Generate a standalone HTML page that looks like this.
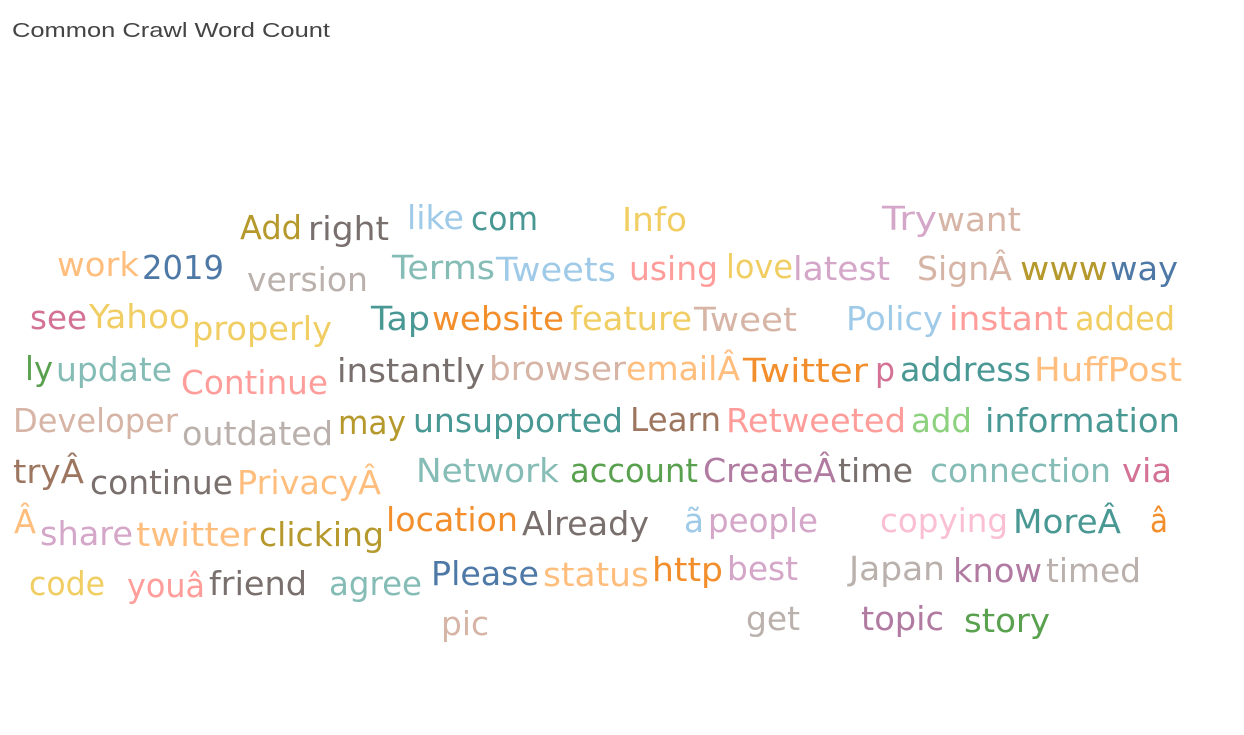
<!DOCTYPE html>
<html><head><meta charset="utf-8"><style>
html,body{margin:0;padding:0;background:#fff;width:1244px;height:735px;overflow:hidden}
svg{display:block}
text{font-family:"DejaVu Sans","Liberation Sans",sans-serif;font-size:33px}
</style></head><body>
<svg width="1244" height="735" xmlns="http://www.w3.org/2000/svg">
<text x="12" y="37" style="font-size:20px;font-family:'Liberation Sans',sans-serif" fill="#444" textLength="318" lengthAdjust="spacingAndGlyphs">Common Crawl Word Count</text>
<g>
<text x="240" y="239" fill="#b6992d" textLength="62" lengthAdjust="spacingAndGlyphs">Add</text>
<text x="308" y="240" fill="#79706e" textLength="81" lengthAdjust="spacingAndGlyphs">right</text>
<text x="407" y="229" fill="#a0cbe8" textLength="57" lengthAdjust="spacingAndGlyphs">like</text>
<text x="471" y="230" fill="#499894" textLength="67" lengthAdjust="spacingAndGlyphs">com</text>
<text x="622" y="231" fill="#f1ce63" textLength="65" lengthAdjust="spacingAndGlyphs">Info</text>
<text x="882" y="230" fill="#d4a6c8" textLength="55" lengthAdjust="spacingAndGlyphs">Try</text>
<text x="937" y="231" fill="#d7b5a6" textLength="84" lengthAdjust="spacingAndGlyphs">want</text>

<text x="57" y="276" fill="#ffbe7d" textLength="82" lengthAdjust="spacingAndGlyphs">work</text>
<text x="142" y="279" fill="#4e79a7" textLength="82" lengthAdjust="spacingAndGlyphs">2019</text>
<text x="247" y="291" fill="#bab0ac" textLength="121" lengthAdjust="spacingAndGlyphs">version</text>
<text x="392" y="279" fill="#86bcb6" textLength="103" lengthAdjust="spacingAndGlyphs">Terms</text>
<text x="496" y="281" fill="#a0cbe8" textLength="120" lengthAdjust="spacingAndGlyphs">Tweets</text>
<text x="629" y="280" fill="#ff9d9a" textLength="89" lengthAdjust="spacingAndGlyphs">using</text>
<text x="726" y="278" fill="#f1ce63" textLength="67" lengthAdjust="spacingAndGlyphs">love</text>
<text x="793" y="280" fill="#d4a6c8" textLength="97" lengthAdjust="spacingAndGlyphs">latest</text>
<text x="917" y="280" fill="#d7b5a6" textLength="95" lengthAdjust="spacingAndGlyphs">SignÂ</text>
<text x="1020" y="280" fill="#b6992d" textLength="88" lengthAdjust="spacingAndGlyphs">www</text>
<text x="1110" y="280" fill="#4e79a7" textLength="68" lengthAdjust="spacingAndGlyphs">way</text>

<text x="30" y="329" fill="#d37295" textLength="57" lengthAdjust="spacingAndGlyphs">see</text>
<text x="89" y="328" fill="#f1ce63" textLength="101" lengthAdjust="spacingAndGlyphs">Yahoo</text>
<text x="192" y="340" fill="#f1ce63" textLength="140" lengthAdjust="spacingAndGlyphs">properly</text>
<text x="371" y="330" fill="#499894" textLength="59" lengthAdjust="spacingAndGlyphs">Tap</text>
<text x="432" y="330" fill="#f28e2b" textLength="132" lengthAdjust="spacingAndGlyphs">website</text>
<text x="570" y="330" fill="#f1ce63" textLength="122" lengthAdjust="spacingAndGlyphs">feature</text>
<text x="694" y="331" fill="#d7b5a6" textLength="103" lengthAdjust="spacingAndGlyphs">Tweet</text>
<text x="846" y="330" fill="#a0cbe8" textLength="97" lengthAdjust="spacingAndGlyphs">Policy</text>
<text x="949" y="330" fill="#ff9d9a" textLength="119" lengthAdjust="spacingAndGlyphs">instant</text>
<text x="1075" y="330" fill="#f1ce63" textLength="100" lengthAdjust="spacingAndGlyphs">added</text>

<text x="25" y="380" fill="#59a14f" textLength="28" lengthAdjust="spacingAndGlyphs">ly</text>
<text x="56" y="381" fill="#86bcb6" textLength="116" lengthAdjust="spacingAndGlyphs">update</text>
<text x="181" y="394" fill="#ff9d9a" textLength="147" lengthAdjust="spacingAndGlyphs">Continue</text>
<text x="337" y="382" fill="#79706e" textLength="148" lengthAdjust="spacingAndGlyphs">instantly</text>
<text x="489" y="380" fill="#d7b5a6" textLength="137" lengthAdjust="spacingAndGlyphs">browser</text>
<text x="626" y="380" fill="#ffbe7d" textLength="114" lengthAdjust="spacingAndGlyphs">emailÂ</text>
<text x="743" y="382" fill="#f28e2b" textLength="125" lengthAdjust="spacingAndGlyphs">Twitter</text>
<text x="875" y="381" fill="#d37295" textLength="20" lengthAdjust="spacingAndGlyphs">p</text>
<text x="900" y="381" fill="#499894" textLength="131" lengthAdjust="spacingAndGlyphs">address</text>
<text x="1034" y="381" fill="#ffbe7d" textLength="148" lengthAdjust="spacingAndGlyphs">HuffPost</text>

<text x="13" y="432" fill="#d7b5a6" textLength="165" lengthAdjust="spacingAndGlyphs">Developer</text>
<text x="182" y="445" fill="#bab0ac" textLength="151" lengthAdjust="spacingAndGlyphs">outdated</text>
<text x="338" y="434" fill="#b6992d" textLength="68" lengthAdjust="spacingAndGlyphs">may</text>
<text x="413" y="432" fill="#499894" textLength="210" lengthAdjust="spacingAndGlyphs">unsupported</text>
<text x="630" y="431" fill="#9d7660" textLength="91" lengthAdjust="spacingAndGlyphs">Learn</text>
<text x="726" y="432" fill="#ff9d9a" textLength="180" lengthAdjust="spacingAndGlyphs">Retweeted</text>
<text x="911" y="432" fill="#8cd17d" textLength="61" lengthAdjust="spacingAndGlyphs">add</text>
<text x="985" y="432" fill="#499894" textLength="195" lengthAdjust="spacingAndGlyphs">information</text>

<text x="13" y="483" fill="#9d7660" textLength="71" lengthAdjust="spacingAndGlyphs">tryÂ</text>
<text x="90" y="494" fill="#79706e" textLength="143" lengthAdjust="spacingAndGlyphs">continue</text>
<text x="237" y="494" fill="#ffbe7d" textLength="144" lengthAdjust="spacingAndGlyphs">PrivacyÂ</text>
<text x="416" y="482" fill="#86bcb6" textLength="143" lengthAdjust="spacingAndGlyphs">Network</text>
<text x="570" y="482" fill="#59a14f" textLength="128" lengthAdjust="spacingAndGlyphs">account</text>
<text x="703" y="482" fill="#b07aa1" textLength="133" lengthAdjust="spacingAndGlyphs">CreateÂ</text>
<text x="838" y="482" fill="#79706e" textLength="75" lengthAdjust="spacingAndGlyphs">time</text>
<text x="930" y="482" fill="#86bcb6" textLength="181" lengthAdjust="spacingAndGlyphs">connection</text>
<text x="1122" y="482" fill="#d37295" textLength="50" lengthAdjust="spacingAndGlyphs">via</text>

<text x="14" y="533" fill="#ffbe7d" textLength="22" lengthAdjust="spacingAndGlyphs">Â</text>
<text x="40" y="545" fill="#d4a6c8" textLength="93" lengthAdjust="spacingAndGlyphs">share</text>
<text x="136" y="546" fill="#ffbe7d" textLength="120" lengthAdjust="spacingAndGlyphs">twitter</text>
<text x="259" y="546" fill="#b6992d" textLength="125" lengthAdjust="spacingAndGlyphs">clicking</text>
<text x="386" y="531" fill="#f28e2b" textLength="132" lengthAdjust="spacingAndGlyphs">location</text>
<text x="522" y="535" fill="#79706e" textLength="127" lengthAdjust="spacingAndGlyphs">Already</text>
<text x="684" y="532" fill="#a0cbe8" textLength="20" lengthAdjust="spacingAndGlyphs">ã</text>
<text x="708" y="532" fill="#d4a6c8" textLength="110" lengthAdjust="spacingAndGlyphs">people</text>
<text x="880" y="532" fill="#fabfd2" textLength="128" lengthAdjust="spacingAndGlyphs">copying</text>
<text x="1013" y="533" fill="#499894" textLength="108" lengthAdjust="spacingAndGlyphs">MoreÂ</text>
<text x="1150" y="532" fill="#f28e2b" textLength="18" lengthAdjust="spacingAndGlyphs">â</text>

<text x="29" y="595" fill="#f1ce63" textLength="76" lengthAdjust="spacingAndGlyphs">code</text>
<text x="127" y="597" fill="#ff9d9a" textLength="78" lengthAdjust="spacingAndGlyphs">youâ</text>
<text x="209" y="595" fill="#79706e" textLength="98" lengthAdjust="spacingAndGlyphs">friend</text>
<text x="329" y="595" fill="#86bcb6" textLength="93" lengthAdjust="spacingAndGlyphs">agree</text>
<text x="431" y="585" fill="#4e79a7" textLength="108" lengthAdjust="spacingAndGlyphs">Please</text>
<text x="543" y="586" fill="#ffbe7d" textLength="106" lengthAdjust="spacingAndGlyphs">status</text>
<text x="652" y="581" fill="#f28e2b" textLength="71" lengthAdjust="spacingAndGlyphs">http</text>
<text x="727" y="580" fill="#d4a6c8" textLength="71" lengthAdjust="spacingAndGlyphs">best</text>
<text x="849" y="580" fill="#bab0ac" textLength="96" lengthAdjust="spacingAndGlyphs">Japan</text>
<text x="953" y="582" fill="#b07aa1" textLength="89" lengthAdjust="spacingAndGlyphs">know</text>
<text x="1046" y="582" fill="#bab0ac" textLength="95" lengthAdjust="spacingAndGlyphs">timed</text>

<text x="441" y="635" fill="#d7b5a6" textLength="48" lengthAdjust="spacingAndGlyphs">pic</text>
<text x="746" y="630" fill="#bab0ac" textLength="54" lengthAdjust="spacingAndGlyphs">get</text>
<text x="861" y="630" fill="#b07aa1" textLength="83" lengthAdjust="spacingAndGlyphs">topic</text>
<text x="964" y="632" fill="#59a14f" textLength="86" lengthAdjust="spacingAndGlyphs">story</text>
</g>
</svg>
</body></html>
